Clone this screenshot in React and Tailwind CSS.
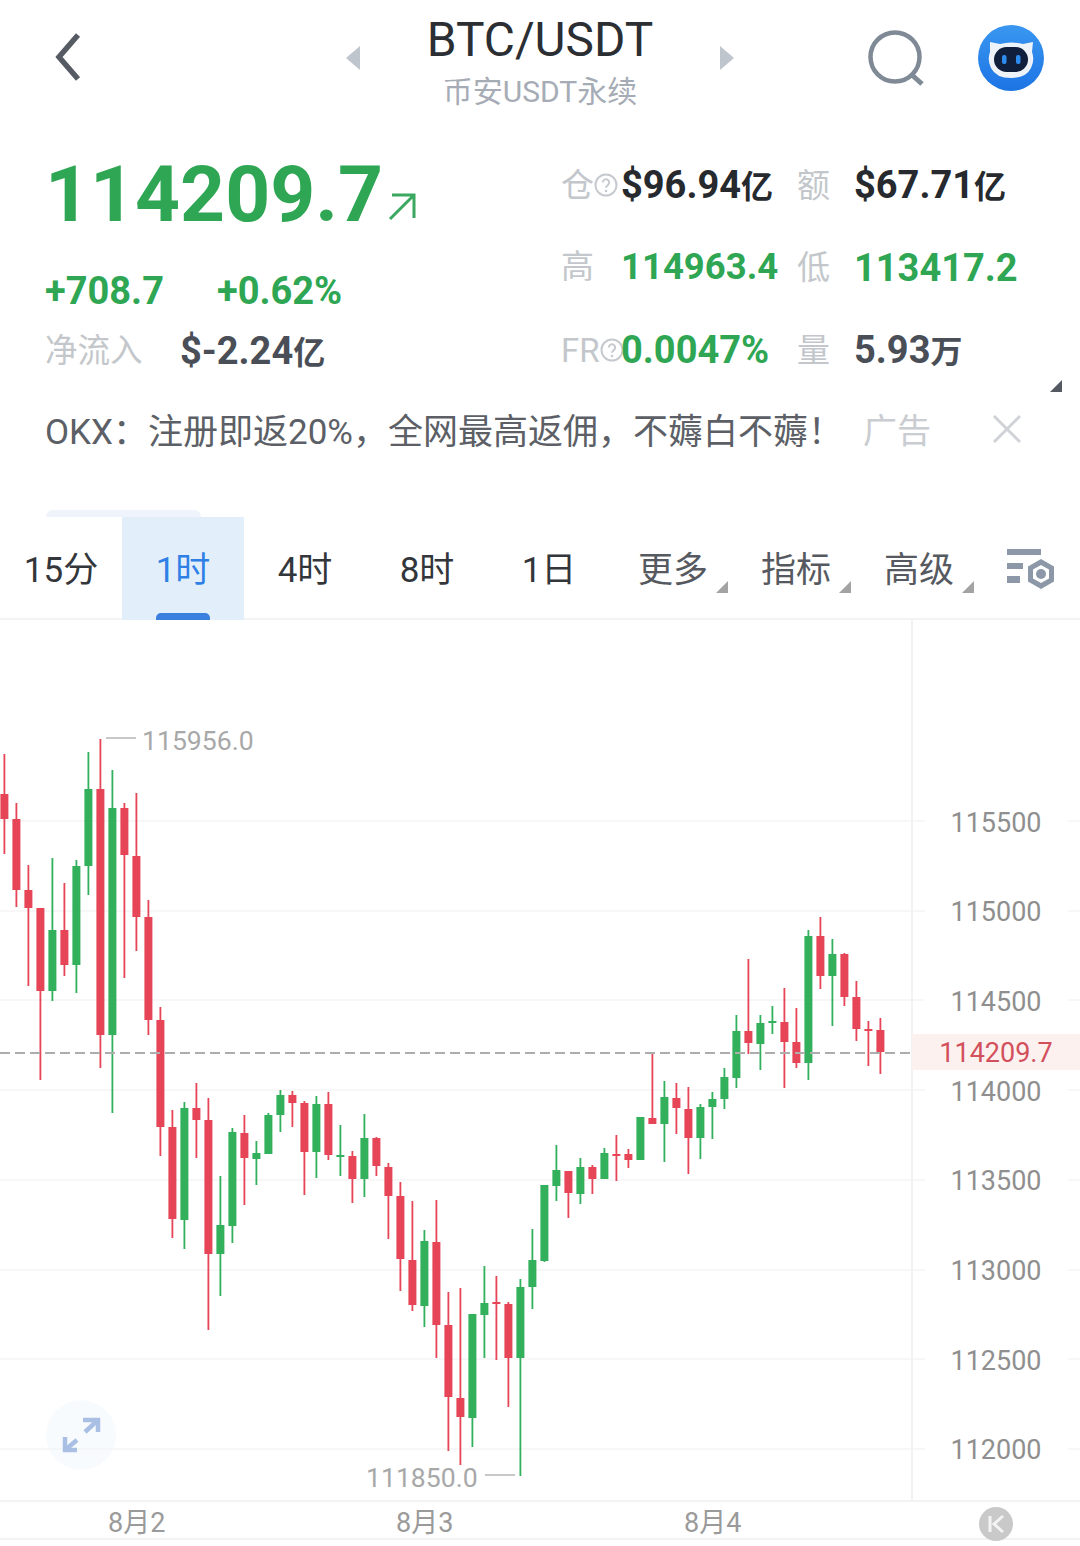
const UP = "#33b05c";
const DOWN = "#e64558";

// [color, wickTop, wickBottom, bodyTop, bodyBottom], one candle every 12px from x=4
const candles = [
  ["r", 754, 854, 794, 819], ["r", 803, 907, 819, 890], ["r", 865, 986, 890, 908], ["r", 908, 1080, 908, 991],
  ["g", 858, 1001, 930, 991], ["r", 883, 976, 930, 965], ["g", 860, 993, 866, 965], ["g", 752, 895, 789, 866],
  ["r", 739, 1068, 789, 1035], ["g", 770, 1113, 808, 1035], ["r", 803, 978, 808, 855], ["r", 793, 951, 856, 917],
  ["r", 900, 1035, 917, 1020], ["r", 1007, 1156, 1020, 1127], ["r", 1110, 1238, 1127, 1219], ["g", 1102, 1249, 1108, 1220],
  ["r", 1083, 1158, 1108, 1120], ["r", 1098, 1330, 1120, 1254], ["g", 1176, 1296, 1225, 1254], ["g", 1128, 1243, 1132, 1226],
  ["r", 1115, 1205, 1133, 1158], ["g", 1141, 1185, 1153, 1159], ["g", 1113, 1154, 1115, 1154], ["g", 1090, 1132, 1095, 1115],
  ["r", 1091, 1127, 1095, 1103], ["r", 1101, 1195, 1103, 1152], ["g", 1096, 1178, 1104, 1152], ["r", 1092, 1160, 1104, 1155],
  ["g", 1125, 1176, 1155, 1156], ["r", 1151, 1203, 1156, 1179], ["g", 1114, 1197, 1138, 1179], ["r", 1137, 1176, 1138, 1166],
  ["r", 1163, 1239, 1167, 1196], ["r", 1182, 1291, 1196, 1259], ["r", 1201, 1311, 1260, 1305], ["g", 1230, 1327, 1241, 1306],
  ["r", 1200, 1358, 1242, 1325], ["r", 1292, 1451, 1325, 1397], ["r", 1288, 1465, 1398, 1417], ["g", 1314, 1447, 1314, 1418],
  ["g", 1266, 1358, 1303, 1315], ["r", 1276, 1360, 1302, 1304], ["r", 1302, 1407, 1304, 1358], ["g", 1279, 1476, 1287, 1358],
  ["g", 1229, 1309, 1260, 1287], ["g", 1185, 1262, 1185, 1261], ["g", 1145, 1201, 1170, 1186], ["r", 1171, 1218, 1171, 1193],
  ["g", 1158, 1204, 1167, 1194], ["r", 1165, 1194, 1167, 1179], ["g", 1148, 1179, 1153, 1179], ["r", 1135, 1181, 1154, 1155],
  ["r", 1149, 1168, 1154, 1160], ["g", 1117, 1160, 1117, 1160], ["r", 1053, 1124, 1118, 1124], ["g", 1081, 1162, 1097, 1124],
  ["r", 1083, 1134, 1098, 1108], ["r", 1087, 1174, 1109, 1138], ["g", 1104, 1159, 1107, 1138], ["g", 1092, 1139, 1099, 1107],
  ["g", 1068, 1109, 1077, 1099], ["g", 1015, 1088, 1031, 1078], ["r", 959, 1054, 1031, 1043], ["g", 1015, 1070, 1023, 1044],
  ["g", 1006, 1034, 1021, 1023], ["r", 988, 1088, 1022, 1042], ["r", 1008, 1068, 1042, 1063], ["g", 930, 1080, 936, 1063],
  ["r", 917, 989, 936, 976], ["g", 939, 1026, 954, 976], ["r", 953, 1006, 954, 997], ["r", 981, 1041, 997, 1029],
  ["r", 1021, 1066, 1029, 1030], ["r", 1018, 1074, 1030, 1052],
];

const gridLines = [821, 911, 1000, 1090, 1180, 1270, 1359, 1449];
const axisPrices = ["115500", "115000", "114500", "114000", "113500", "113000", "112500", "112000"];

function Caret({ flip }) {
  return (
    <svg width="14" height="24" viewBox="0 0 14 24" className="shrink-0">
      <polygon points={flip ? "0,0 14,12 0,24" : "14,0 0,12 14,24"} fill="#bfc5cc" />
    </svg>
  );
}

function Help() {
  return (
    <svg width="24" height="24" viewBox="0 0 24 24" className="shrink-0">
      <circle cx="12" cy="12" r="10.5" fill="none" stroke="#c6cacf" strokeWidth="2" />
      <path d="M8.8 9.5a3.2 3.2 0 1 1 5 2.6c-1.2.8-1.8 1.3-1.8 2.7" fill="none" stroke="#c6cacf" strokeWidth="2" />
      <circle cx="12" cy="18" r="1.3" fill="#c6cacf" />
    </svg>
  );
}

function Corner() {
  return (
    <svg width="12" height="12" viewBox="0 0 12 12" className="shrink-0">
      <polygon points="12,0 12,12 0,12" fill="#a3a3a3" />
    </svg>
  );
}

function Value({ color, unit, children, narrow }) {
  return (
    <span
      className={narrow ? "text-[36.5px] leading-none font-bold whitespace-nowrap" : "text-[38px] leading-none font-bold whitespace-nowrap"}
      style={{ color }}
    >
      {children}
      {unit && <span className="text-[32px] font-bold">{unit}</span>}
    </span>
  );
}

function Stat({ label, help, labelWidth, ...value }) {
  return (
    <div className="flex items-center">
      <div className="flex shrink-0 items-center" style={{ width: labelWidth }}>
        <span className="text-[33px] leading-none text-[#c3c7cb]">{label}</span>
        {help && <Help />}
      </div>
      <Value {...value} />
    </div>
  );
}

function Avatar() {
  return (
    <svg width="68" height="68" viewBox="977 24 68 68">
      <defs>
        <linearGradient id="av" x1="0" y1="0" x2="0" y2="1">
          <stop offset="0" stopColor="#3a97f0" />
          <stop offset="1" stopColor="#1c74e4" />
        </linearGradient>
      </defs>
      <circle cx="1011" cy="58" r="33" fill="url(#av)" />
      <path
        d="M990 42 L1000 44 Q1011 41 1023 44 L1033 42 L1032 52 Q1035 60 1031 68 Q1026 78 1011 78 Q996 78 991 68 Q987 60 990 52 Z"
        fill="#eef3f9"
      />
      <rect x="994" y="47" width="34" height="25" rx="12.5" fill="#10203c" />
      <rect x="1002" y="55" width="4.5" height="9" rx="2" fill="#2d8cf0" />
      <rect x="1016" y="55" width="4.5" height="9" rx="2" fill="#2d8cf0" />
    </svg>
  );
}

function Chart() {
  return (
    <svg width="1080" height="880" viewBox="0 620 1080 880" className="block">
      <circle cx="81" cy="1435" r="35" fill="#f8fbfe" />
      {gridLines.map((y) => (
        <g key={y} stroke="#f4f5f6" strokeWidth="1.6">
          <line x1="0" x2="925" y1={y} y2={y} />
          <line x1="1068" x2="1080" y1={y} y2={y} />
        </g>
      ))}
      <line x1="912" x2="912" y1="620" y2="1500" stroke="#f1f2f3" strokeWidth="2" />
      <g fill="none" stroke="#a9bfe4" strokeWidth="4.5">
        <path d="M83 1420 H98 V1432" />
        <line x1="98" y1="1420" x2="85" y2="1432" />
        <path d="M65 1437 V1450 H77" />
        <line x1="65" y1="1450" x2="77" y2="1440" />
      </g>
      {candles.map(([c, wt, wb, bt, bb], i) => {
        const x = 4.4 + i * 12;
        const fill = c === "g" ? UP : DOWN;
        return (
          <g key={i} fill={fill}>
            <rect x={x - 0.9} y={wt} width="1.8" height={wb - wt} />
            <rect x={x - 4} y={bt} width="8" height={Math.max(bb - bt, 2)} />
          </g>
        );
      })}
      <line x1="0" x2="912" y1="1053" y2="1053" stroke="#adadad" strokeWidth="2" strokeDasharray="10 5" />
      <line x1="106" x2="136" y1="738" y2="738" stroke="#c8c8c8" strokeWidth="2" />
      <line x1="485" x2="515" y1="1475" y2="1475" stroke="#c8c8c8" strokeWidth="2" />
    </svg>
  );
}

export default function App() {
  return (
    <div
      className="flex h-[1546px] w-[1080px] flex-col overflow-hidden bg-white"
      style={{ fontFamily: "Roboto, 'Noto Sans CJK SC', sans-serif" }}
    >
      {/* header */}
      <div className="flex h-[124px] shrink-0 items-start">
        <svg width="30" height="52" viewBox="0 0 30 52" className="mt-[31px] ml-[53px] shrink-0">
          <path d="M25 4 L6 26 L25 48" fill="none" stroke="#565b63" strokeWidth="5.5" />
        </svg>
        <div className="mt-[46px] ml-[263px]">
          <Caret />
        </div>
        <div className="flex w-[360px] flex-col items-center">
          <span className="mt-[10px] text-[47.8px] leading-[60px] text-[#2b2e33]">BTC/USDT</span>
          <span className="mt-[4px] text-[30px] leading-[36px] text-[#a6acb5]">币安USDT永续</span>
        </div>
        <div className="mt-[46px]">
          <Caret flip />
        </div>
        <svg width="60" height="60" viewBox="0 0 60 60" className="mt-[29px] ml-[134px] shrink-0">
          <circle cx="27" cy="28" r="24.5" fill="none" stroke="#7f8a96" strokeWidth="4.5" />
          <path d="M44 46 L54 55" fill="none" stroke="#7f8a96" strokeWidth="5" />
        </svg>
        <div className="mt-[24px] ml-[49px]">
          <Avatar />
        </div>
      </div>

      {/* stats */}
      <div className="flex h-[271px] shrink-0 pt-[20px]">
        <div className="w-[561px] shrink-0 pl-[45px]">
          <div className="flex h-[100px] items-center">
            <span className="text-[78.5px] leading-none font-bold text-[#2ea653]">114209.7</span>
            <svg width="30" height="28" viewBox="0 0 30 28" className="mt-[26px] ml-[4px] shrink-0">
              <path d="M5 2 H27 V25 M27 2 L3 26" fill="none" stroke="#3aa85f" strokeWidth="3" />
            </svg>
          </div>
          <div className="mt-[17px] flex h-[60px] items-center gap-[53px]">
            <Value color="#2ea653">+708.7</Value>
            <Value color="#2ea653">+0.62%</Value>
          </div>
          <div className="flex h-[60px] items-center">
            <span className="w-[135px] text-[32.5px] leading-none text-[#c3c7cb]">净流入</span>
            <Value color="#4a4e57" unit="亿">$-2.24</Value>
          </div>
        </div>
        <div className="relative flex-1">
          <div className="flex h-[82.5px] items-start pt-[22px]">
            <div className="w-[236px]">
              <Stat label="仓" help labelWidth={60} color="#26292e" unit="亿">$96.94</Stat>
            </div>
            <Stat label="额" labelWidth={57} color="#26292e" unit="亿">$67.71</Stat>
          </div>
          <div className="flex h-[82.5px] items-start pt-[22px]">
            <div className="w-[236px]">
              <Stat label="高" labelWidth={60} color="#2ea653" narrow>114963.4</Stat>
            </div>
            <Stat label="低" labelWidth={57} color="#2ea653">113417.2</Stat>
          </div>
          <div className="flex h-[82.5px] items-start pt-[22px]">
            <div className="w-[236px]">
              <Stat label="FR" help labelWidth={60} color="#2ea653">0.0047%</Stat>
            </div>
            <Stat label="量" labelWidth={57} color="#4a4e57" unit="万">5.93</Stat>
          </div>
          <svg width="12" height="12" viewBox="0 0 12 12" className="absolute top-[236px] right-[18px]">
            <polygon points="12,0 12,12 0,12" fill="#555a62" />
          </svg>
        </div>
      </div>

      {/* ad */}
      <div className="flex h-[70px] shrink-0 items-center pl-[45px]">
        <span className="mt-[4px] w-[818px] text-[35px] leading-none whitespace-nowrap text-[#5c6066]">
          OKX：注册即返20%，全网最高返佣，不薅白不薅！
        </span>
        <span className="mt-[2px] text-[34px] leading-none text-[#c9ccd0]">广告</span>
        <svg width="30" height="30" viewBox="0 0 30 30" className="-mt-[2px] ml-[61px] shrink-0">
          <path d="M2 2 L28 28 M28 2 L2 28" fill="none" stroke="#cfd2d6" strokeWidth="3" />
        </svg>
      </div>

      {/* tabs */}
      <div className="ml-[46px] mt-[45px] h-[7px] w-[155px] shrink-0 rounded-t-[10px] bg-[#eff4fc]" />
      <div className="flex h-[103px] shrink-0 border-b-2 border-[#f2f3f4] text-[35px]">
        <div className="flex w-[122px] items-center justify-center pt-[8px] text-[#33363b]">15分</div>
        <div className="relative -mb-[2px] flex w-[122px] items-center justify-center bg-[#e3eefb] pt-[6px] text-[#2f80e6]">
          1时
          <div className="absolute bottom-0 left-[34px] h-[7px] w-[54px] rounded-t-[5px] bg-[#3b7fdf]" />
        </div>
        <div className="flex w-[122px] items-center justify-center pt-[8px] text-[#33363b]">4时</div>
        <div className="flex w-[122px] items-center justify-center pt-[8px] text-[#33363b]">8时</div>
        <div className="flex w-[122px] items-center justify-center pt-[8px] text-[#33363b]">1日</div>
        <div className="flex w-[123px] items-center pt-[8px] pl-[28px] text-[#565a60]">
          更多
          <div className="mt-[30px] ml-[8px]"><Corner /></div>
        </div>
        <div className="flex w-[123px] items-center pt-[8px] pl-[28px] text-[#565a60]">
          指标
          <div className="mt-[30px] ml-[8px]"><Corner /></div>
        </div>
        <div className="flex w-[123px] items-center pt-[8px] pl-[28px] text-[#565a60]">
          高级
          <div className="mt-[30px] ml-[8px]"><Corner /></div>
        </div>
        <svg width="50" height="42" viewBox="0 0 50 42" className="mt-[31px] ml-[27px] shrink-0">
          <g fill="#8c98a8">
            <rect x="1" y="1" width="34" height="6" />
            <rect x="1" y="15" width="16" height="6" />
            <rect x="1" y="28" width="13" height="7" />
            <path fillRule="evenodd" d="M35 11 L48 18.5 V33.5 L35 41 L22 33.5 V18.5 Z M35 17 L27 21.5 V30.5 L35 35 L43 30.5 V21.5 Z" />
            <circle cx="35" cy="26" r="5" />
          </g>
        </svg>
      </div>

      {/* chart */}
      <div className="relative h-[880px] shrink-0">
        <Chart />
        <span className="absolute top-[104px] left-[142px] text-[26.6px] leading-[34px] text-[#a8a8a8]">115956.0</span>
        <span className="absolute top-[841px] left-[366px] text-[26.6px] leading-[34px] text-[#a8a8a8]">111850.0</span>
        <div className="absolute top-[158px] right-0 flex w-[168px] flex-col">
          {axisPrices.map((p) => (
            <div key={p} className="flex h-[89.7px] items-center justify-center text-[27px] text-[#8f8f8f]">
              {p}
            </div>
          ))}
        </div>
        <div className="absolute top-[414px] right-0 flex h-[36px] w-[168px] items-center justify-center bg-[#fdf1f0] pt-[3px] text-[27px] text-[#d2505c]">
          114209.7
        </div>
      </div>

      {/* time axis */}
      <div className="flex h-[40px] shrink-0 items-center border-y-2 border-[#f2f3f4] pt-[6px]">
        <span className="ml-[108px] w-[288px] text-[27px] text-[#9a9a9a]">8月2</span>
        <span className="w-[288px] text-[27px] text-[#9a9a9a]">8月3</span>
        <span className="w-[295px] text-[27px] text-[#9a9a9a]">8月4</span>
        <svg width="34" height="34" viewBox="0 0 34 34" className="mt-[2px] shrink-0">
          <circle cx="17" cy="17" r="17" fill="#c9c9c9" />
          <path d="M11 9 V25 M24 9 L15 17 L24 25" fill="none" stroke="#f4f4f4" strokeWidth="3" />
        </svg>
      </div>
    </div>
  );
}
